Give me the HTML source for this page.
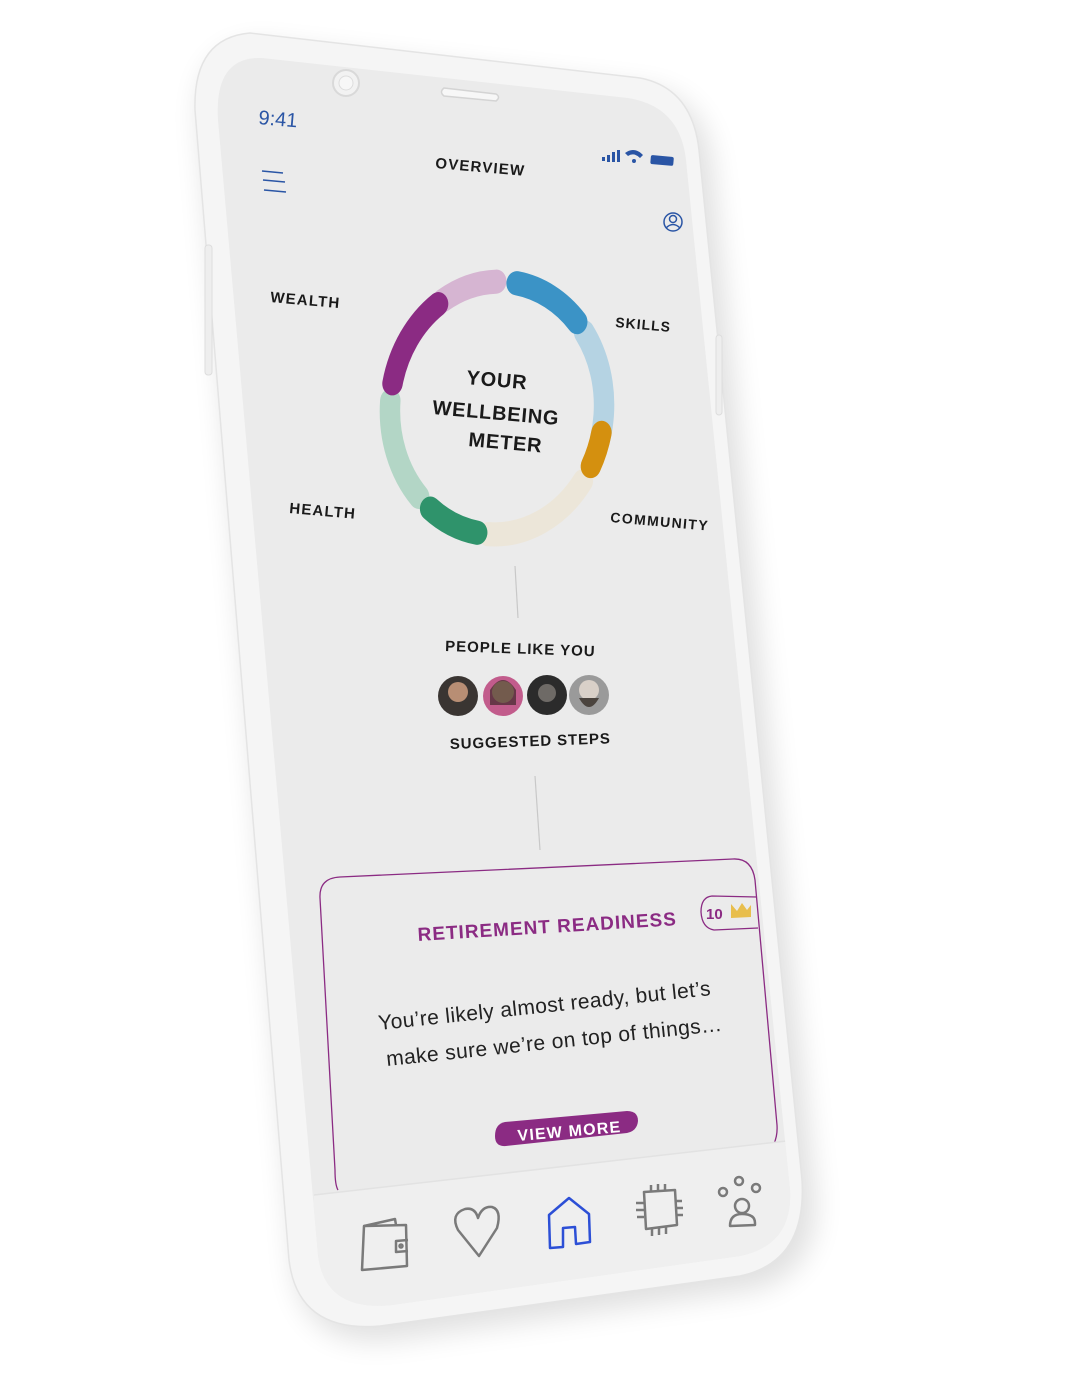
<!DOCTYPE html>
<html><head><meta charset="utf-8"><style>
html,body{margin:0;padding:0;background:#fff;width:1079px;height:1385px;overflow:hidden}
svg{display:block}
text{font-family:"Liberation Sans",sans-serif}
</style></head><body>
<svg width="1079" height="1385" viewBox="0 0 1079 1385" xmlns="http://www.w3.org/2000/svg">
<defs>
<filter id="sh" x="-20%" y="-20%" width="140%" height="140%"><feGaussianBlur stdDeviation="14"/></filter>
<clipPath id="scr"><path d="M262,58 L628,98 Q680,106 686,160 L790,1190 Q793,1245 740,1256 L392,1305 Q325,1312 318,1255 L218,120 Q214,56 262,58 Z"/></clipPath>
</defs>
<path d="M260,45 L650,90 Q705,100 712,165 L815,1195 Q820,1275 750,1290 L390,1340 Q305,1348 295,1270 L200,120 Q198,48 260,45 Z" fill="#000" opacity="0.12" filter="url(#sh)"/>
<path d="M250,33 L640,78 Q692,88 699,150 L802,1180 Q807,1262 740,1276 L380,1326 Q298,1333 289,1260 L195,110 Q193,38 250,33 Z" fill="#f5f5f5" stroke="#e4e4e4" stroke-width="1.5"/>
<path d="M262,58 L628,98 Q680,106 686,160 L790,1190 Q793,1245 740,1256 L392,1305 Q325,1312 318,1255 L218,120 Q214,56 262,58 Z" fill="#ebebeb"/>
<rect x="205" y="245" width="7" height="130" rx="3" fill="#eee" stroke="#ddd"/>
<rect x="716" y="335" width="6" height="80" rx="3" fill="#eee" stroke="#ddd"/>
<circle cx="346" cy="83" r="13" fill="#f2f2f2" stroke="#d9d9d9" stroke-width="2"/>
<circle cx="346" cy="83" r="7" fill="#f7f7f7" stroke="#ddd"/>
<path d="M444,88 L496,94 Q501,97 496,101 L444,96 Q439,92 444,88 Z" fill="#f7f7f7" stroke="#d4d4d4" stroke-width="1.5"/>

<text x="258" y="124" font-size="20" fill="#2a55a5" transform="rotate(5 258 124)">9:41</text>
<g fill="#2a55a5">
<rect x="602" y="157" width="3" height="4"/><rect x="607" y="155" width="3" height="7"/><rect x="612" y="152" width="3" height="10"/><rect x="617" y="150" width="3" height="12"/>
<path d="M625,153 Q634,146 643,155 L640,158 Q634,152 628,156 Z"/><circle cx="634" cy="161" r="2"/>
<rect x="651" y="155" width="23" height="9" rx="2" transform="rotate(5 651 155)"/>
</g>
<text x="435" y="168" font-size="15" font-weight="bold" letter-spacing="1.2" fill="#1a1a1a" transform="rotate(5 435 168)">OVERVIEW</text>
<g stroke="#2a55a5" stroke-width="1.5"><line x1="262" y1="171" x2="283" y2="173"/><line x1="263" y1="180" x2="285" y2="182"/><line x1="264" y1="190" x2="286" y2="192"/></g>
<g stroke="#2a55a5" stroke-width="1.5" fill="none"><circle cx="673" cy="222" r="9"/><circle cx="673" cy="219" r="3.5"/><path d="M666,228 Q673,221 680,228"/></g>

<g transform="translate(497,408) rotate(4) scale(0.93,1.1)" fill="none" stroke-width="22" stroke-linecap="round">
<circle r="115" pathLength="360" stroke="#d6b5d2" stroke-dasharray="30 330" stroke-dashoffset="-235"/>
<circle r="115" pathLength="360" stroke="#b5d3e3" stroke-dasharray="50 310" stroke-dashoffset="-320"/>
<circle r="115" pathLength="360" stroke="#3b93c6" stroke-dasharray="38 322" stroke-dashoffset="-276"/>
<circle r="115" pathLength="360" stroke="#ece6d9" stroke-dasharray="58 302" stroke-dashoffset="-32"/>
<circle r="115" pathLength="360" stroke="#d4900f" stroke-dasharray="16 344" stroke-dashoffset="-8"/>
<circle r="115" pathLength="360" stroke="#b3d6c6" stroke-dasharray="48 312" stroke-dashoffset="-132"/>
<circle r="115" pathLength="360" stroke="#2f936b" stroke-dasharray="28 332" stroke-dashoffset="-96"/>
<circle r="115" pathLength="360" stroke="#8b2b83" stroke-dasharray="44 316" stroke-dashoffset="-188"/>
</g>
<g font-weight="bold" fill="#1a1a1a">
<text x="466" y="384" font-size="20" letter-spacing="0.8" transform="rotate(5 466 384)">YOUR</text>
<text x="432" y="414" font-size="20" letter-spacing="0.8" transform="rotate(5 432 414)">WELLBEING</text>
<text x="468" y="446" font-size="20" letter-spacing="0.8" transform="rotate(5 468 446)">METER</text>
<text x="270" y="302" font-size="15" letter-spacing="1.2" transform="rotate(5 270 302)">WEALTH</text>
<text x="615" y="327" font-size="14" letter-spacing="1" transform="rotate(5 615 327)">SKILLS</text>
<text x="289" y="513" font-size="15" letter-spacing="1.2" transform="rotate(5 289 513)">HEALTH</text>
<text x="610" y="522" font-size="14" letter-spacing="1.4" transform="rotate(5 610 522)">COMMUNITY</text>
<text x="445" y="651" font-size="15" letter-spacing="1" transform="rotate(2 445 651)">PEOPLE LIKE YOU</text>
<text x="450" y="749" font-size="15" letter-spacing="0.9" transform="rotate(-2 450 749)">SUGGESTED STEPS</text>
</g>
<g stroke="#c8c8c8" stroke-width="1.2"><line x1="515" y1="566" x2="518" y2="618"/><line x1="535" y1="776" x2="540" y2="850"/></g>
<circle cx="458" cy="696" r="20" fill="#3a3532"/><circle cx="458" cy="692" r="10" fill="#b88e74"/>
<circle cx="503" cy="696" r="20" fill="#c25c8c"/><circle cx="503" cy="692" r="11" fill="#e2b79a"/><path d="M490,690 Q503,670 516,690 L516,705 L490,705Z" fill="#2a1e1a" opacity="0.6"/>
<circle cx="547" cy="695" r="20" fill="#2b2b2b"/><circle cx="547" cy="693" r="9" fill="#6e6a66"/>
<circle cx="589" cy="695" r="20" fill="#9a9a9a"/><circle cx="589" cy="690" r="10" fill="#d9d0c8"/><path d="M579,698 Q589,716 599,698Z" fill="#4b443e"/>

<g clip-path="url(#scr)">
<path d="M338,1190 Q335,1185 335,1170 L320,898 Q319,878 340,877 L733,859 Q752,858 755,880 L777,1125 Q778,1140 770,1150" fill="none" stroke="#8b2b83" stroke-width="1.3"/>
<text x="418" y="941" font-size="19" font-weight="bold" fill="#8b2b83" letter-spacing="1" transform="rotate(-3.5 418 941)">RETIREMENT READINESS</text>
<path d="M757,897 L712,896 Q701,897 701,912 Q702,928 714,930 L758,928" fill="none" stroke="#8b2b83" stroke-width="1.3"/>
<text x="706" y="919" font-size="15" font-weight="bold" fill="#8b2b83">10</text>
<path d="M731,904 L737,911 L742,903 L747,910 L751,905 L751,917 L731,918 Z" fill="#e8be4d"/>
<g font-size="21" fill="#222" letter-spacing="0.4">
<text x="379" y="1030" transform="rotate(-6 379 1030)">You’re likely almost ready, but let’s</text>
<text x="387" y="1066" transform="rotate(-6 387 1066)">make sure we’re on top of things…</text>
</g>
<path d="M505,1122 L627,1111 Q638,1111 638,1121 Q637,1131 627,1133 L506,1146 Q495,1147 495,1136 Q495,1124 505,1122Z" fill="#8b2b83"/>
<text x="518" y="1141" font-size="16" font-weight="bold" fill="#fff" letter-spacing="1.2" transform="rotate(-5 518 1141)">VIEW MORE</text>
<path d="M314,1195 L795,1140 L820,1400 L300,1400 Z" fill="#efefef"/>
<line x1="314" y1="1195" x2="795" y2="1140" stroke="#e2e2e2" stroke-width="1.5"/>
</g>
<g fill="none" stroke="#7a7a7a" stroke-width="2.5" stroke-linejoin="round">
<path d="M364,1226 L362,1270 L407,1266 L406,1225 Z"/><path d="M364,1226 L395,1219 L396,1225"/><path d="M408,1240 L396,1241 L396,1252 L408,1251"/><circle cx="401" cy="1246" r="1.5"/>
<path d="M479,1256 L458,1230 Q450,1214 465,1209 Q475,1207 478,1218 Q482,1206 492,1207 Q502,1210 497,1228 Z"/>
<path d="M644,1192 L675,1190 L677,1225 L646,1229 Z"/>
<path d="M651,1192 V1185 M658,1191 V1184 M665,1191 V1184 M652,1229 V1236 M659,1228 V1235 M666,1227 V1234 M644,1203 H636 M644,1210 H636 M644,1217 H637 M675,1201 H682 M676,1208 H683 M676,1215 H683"/>
<circle cx="739" cy="1181" r="4"/><circle cx="723" cy="1192" r="4"/><circle cx="756" cy="1188" r="4"/>
<circle cx="742" cy="1206" r="7"/><path d="M730,1226 Q730,1214 742,1214 Q755,1214 755,1223 L755,1225 Z"/>
</g>
<path d="M550,1248 L549,1215 L569,1198 L589,1214 L590,1242 L576,1244 L575,1227 L563,1228 L563,1247 Z" fill="none" stroke="#2c4fd6" stroke-width="2.5" stroke-linejoin="round"/>
</svg>
</body></html>
